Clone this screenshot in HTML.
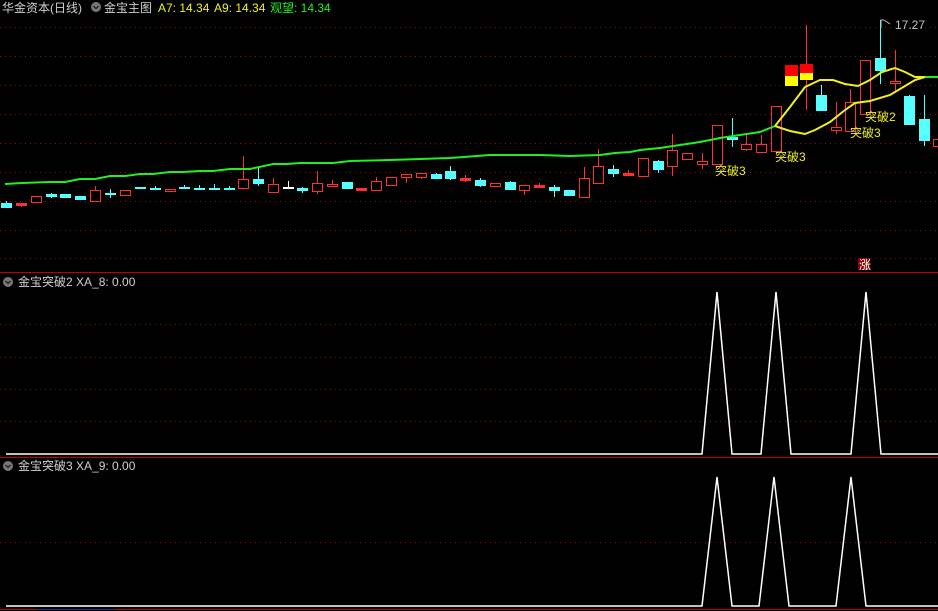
<!DOCTYPE html><html><head><meta charset="utf-8"><style>
html,body{margin:0;padding:0;background:#000;width:938px;height:611px;overflow:hidden}
svg{display:block}
text{font-family:"Liberation Sans","Noto Sans CJK SC",sans-serif;font-size:12px}
</style></head><body>
<svg id="s" width="938" height="611" xmlns="http://www.w3.org/2000/svg">
<g id="grid" stroke="#8a1010" stroke-width="1" stroke-dasharray="1 4"></g>
<line x1="0" y1="272.5" x2="938" y2="272.5" stroke="#c00000"/>
<line x1="0" y1="457.5" x2="938" y2="457.5" stroke="#c00000"/>
<line x1="0" y1="609.5" x2="938" y2="609.5" stroke="#c00000"/>
<line x1="37" y1="609.5" x2="115" y2="609.5" stroke="#2020a0"/>
<g id="c"></g>
<polyline fill="none" stroke="#22ee22" stroke-width="2" points="5,184 22,183 50,182 65,182 80,179 95,179 110,176 125,176 140,174 153,174 170,172 183,172 200,171 213,171 230,169 250,169 273,164 287,164 300,163 333,163 350,161 390,160 420,159 450,158 490,155 540,155 570,156 600,155 615,153 630,152 640,150 660,148 680,145 700,142 720,138 740,135 760,132 775,126"/>
<polyline fill="none" stroke="#22ee22" stroke-width="2" points="922,77 938,77"/>
<polyline fill="none" stroke="#f0f020" stroke-width="2" points="775,126 790,107 805,87 820,80 833,80 845,84 858,86 870,80 882,72 895,68 905,72 915,77 925,77"/>
<polyline fill="none" stroke="#f0f020" stroke-width="2" points="775,126 790,131 805,134 815,130 830,122 845,110 855,103 870,101 890,95 905,86 915,80 925,77"/>
<g fill="#f0f020">
<text x="715" y="175">突破3</text><text x="775" y="161">突破3</text><text x="850" y="137">突破3</text><text x="865" y="121">突破2</text>
</g>
<path d="M881,28 V20 H884 M884,20 L890,24" stroke="#bbb" fill="none"/>
<text x="895" y="29" fill="#c0c0c0">17.27</text>
<rect x="858" y="258" width="12" height="12" fill="#8a0000"/>
<text x="859" y="269" fill="#fff" font-size="11">涨</text>
<g fill="none" stroke="#fff" stroke-width="1.5">
<polyline points="6,454 702,454 717,292 732,454 761,454 776,292 791,454 851,454 866,292 881,454 938,454"/>
<polyline points="6,606 702,606 717,477 732,606 759,606 774,477 789,606 836,606 851,477 866,606 938,606"/>
</g>
<circle cx="96" cy="7" r="5" fill="#777"/><path d="M93.5,6 L96,8.5 L98.5,6" stroke="#222" fill="none" stroke-width="1.3"/>
<circle cx="8" cy="282" r="5" fill="#777"/><path d="M5.5,281 L8,283.5 L10.5,281" stroke="#222" fill="none" stroke-width="1.3"/>
<circle cx="8" cy="466" r="5" fill="#777"/><path d="M5.5,465 L8,467.5 L10.5,465" stroke="#222" fill="none" stroke-width="1.3"/>
<text x="2" y="12" fill="#d0d0d0">华金资本(日线)</text>
<text x="104" y="12" fill="#d0d0d0">金宝主图</text>
<text x="158" y="12" fill="#f0f020">A7: 14.34</text>
<text x="214" y="12" fill="#f0f020">A9: 14.34</text>
<text x="270" y="12" fill="#22ee22">观望: 14.34</text>
<text x="18" y="286" fill="#d0d0d0">金宝突破2 XA_8: 0.00</text>
<text x="18" y="470" fill="#d0d0d0">金宝突破3 XA_9: 0.00</text>
</svg>
<script>
var ns="http://www.w3.org/2000/svg";
function el(p,t,a){var e=document.createElementNS(ns,t);for(var k in a)e.setAttribute(k,a[k]);p.appendChild(e);return e;}
var g=document.getElementById('grid');
[27,56,85,114,143,172,201,230,258,324,357,389,421,542].forEach(function(y){el(g,'line',{x1:0,x2:938,y1:y+.5,y2:y+.5});});
var C=document.getElementById('c');
var d=[[6,203,207,201,207,'c'],[21,203,205,203,207,'rf'],[36,196,202,196,202,'r'],[51,194,196,193,198,'c'],[65,194,197,194,197,'c'],[80,196,199,196,199,'c'],[95,190,201,186,201,'r'],[110,193,194,189,198,'c'],[125,190,195,190,195,'r'],[140,187,188,187,188,'c'],[155,188,189,186,190,'c'],[170,189,191,189,191,'r'],[184,187,188,185,189,'c'],[199,188,189,185,189,'c'],[214,188,189,184,189,'c'],[229,188,189,186,190,'c'],[243,179,188,156,188,'r'],[258,179,183,166,186,'c'],[273,184,192,178,192,'r'],[288,187,188,181,188,'w'],[302,188,190,187,193,'c'],[317,183,191,171,194,'r'],[332,184,186,180,187,'r'],[347,182,188,182,188,'c'],[361,188,190,188,190,'rf'],[376,181,190,177,190,'r'],[391,177,185,177,185,'r'],[406,174,177,174,183,'r'],[421,173,177,173,179,'r'],[436,174,178,173,178,'c'],[450,171,178,166,180,'c'],[465,178,180,175,182,'rf'],[480,180,185,178,187,'c'],[495,183,186,183,186,'r'],[510,182,189,181,190,'c'],[524,185,190,185,195,'r'],[539,185,187,183,187,'rf'],[554,187,190,185,197,'c'],[569,190,195,190,195,'c'],[584,178,197,167,197,'r'],[598,166,183,149,184,'r'],[613,169,173,165,177,'c'],[628,173,175,170,176,'rf'],[643,158,176,158,176,'r'],[658,161,169,160,173,'c'],[672,150,166,134,176,'r'],[687,153,159,153,159,'r'],[702,161,164,153,169,'r'],[717,125,164,125,164,'r'],[732,137,139,118,147,'c'],[746,144,149,135,151,'r'],[761,144,152,135,153,'r'],[776,106,151,106,151,'r'],[821,95,110,85,110,'c'],[836,127,130,102,134,'r'],[850,102,131,89,131,'r'],[865,60,114,60,114,'r'],[880,58,70,20,84,'c'],[895,81,83,50,92,'r'],[909,96,124,95,124,'c'],[924,119,140,95,146,'c'],[938,139,146,139,146,'r']];
var col={r:'#ff3030',rf:'#ff3030',c:'#55ffff',w:'#ffffff'};
d.forEach(function(a){var x=a[0],cl=col[a[5]],w=10;
el(C,'line',{x1:x+.5,x2:x+.5,y1:a[3],y2:a[4],stroke:cl});
var h=Math.max(a[2]-a[1],1);
if(a[5]=='r')el(C,'rect',{x:x-w/2+.5,y:a[1]+.5,width:w,height:h,fill:'#000',stroke:cl});
else el(C,'rect',{x:x-w/2,y:a[1],width:w+1,height:h+1,fill:cl});});
el(C,'line',{x1:806.5,x2:806.5,y1:25,y2:110,stroke:'#ff3030'});
el(C,'rect',{x:785,y:65,width:13,height:11,fill:'#ff0000'});el(C,'rect',{x:785,y:76,width:13,height:10,fill:'#ffff00'});
el(C,'rect',{x:800,y:64,width:13,height:9,fill:'#ff0000'});el(C,'rect',{x:800,y:73,width:13,height:7,fill:'#ffff00'});
</script>
</body></html>
